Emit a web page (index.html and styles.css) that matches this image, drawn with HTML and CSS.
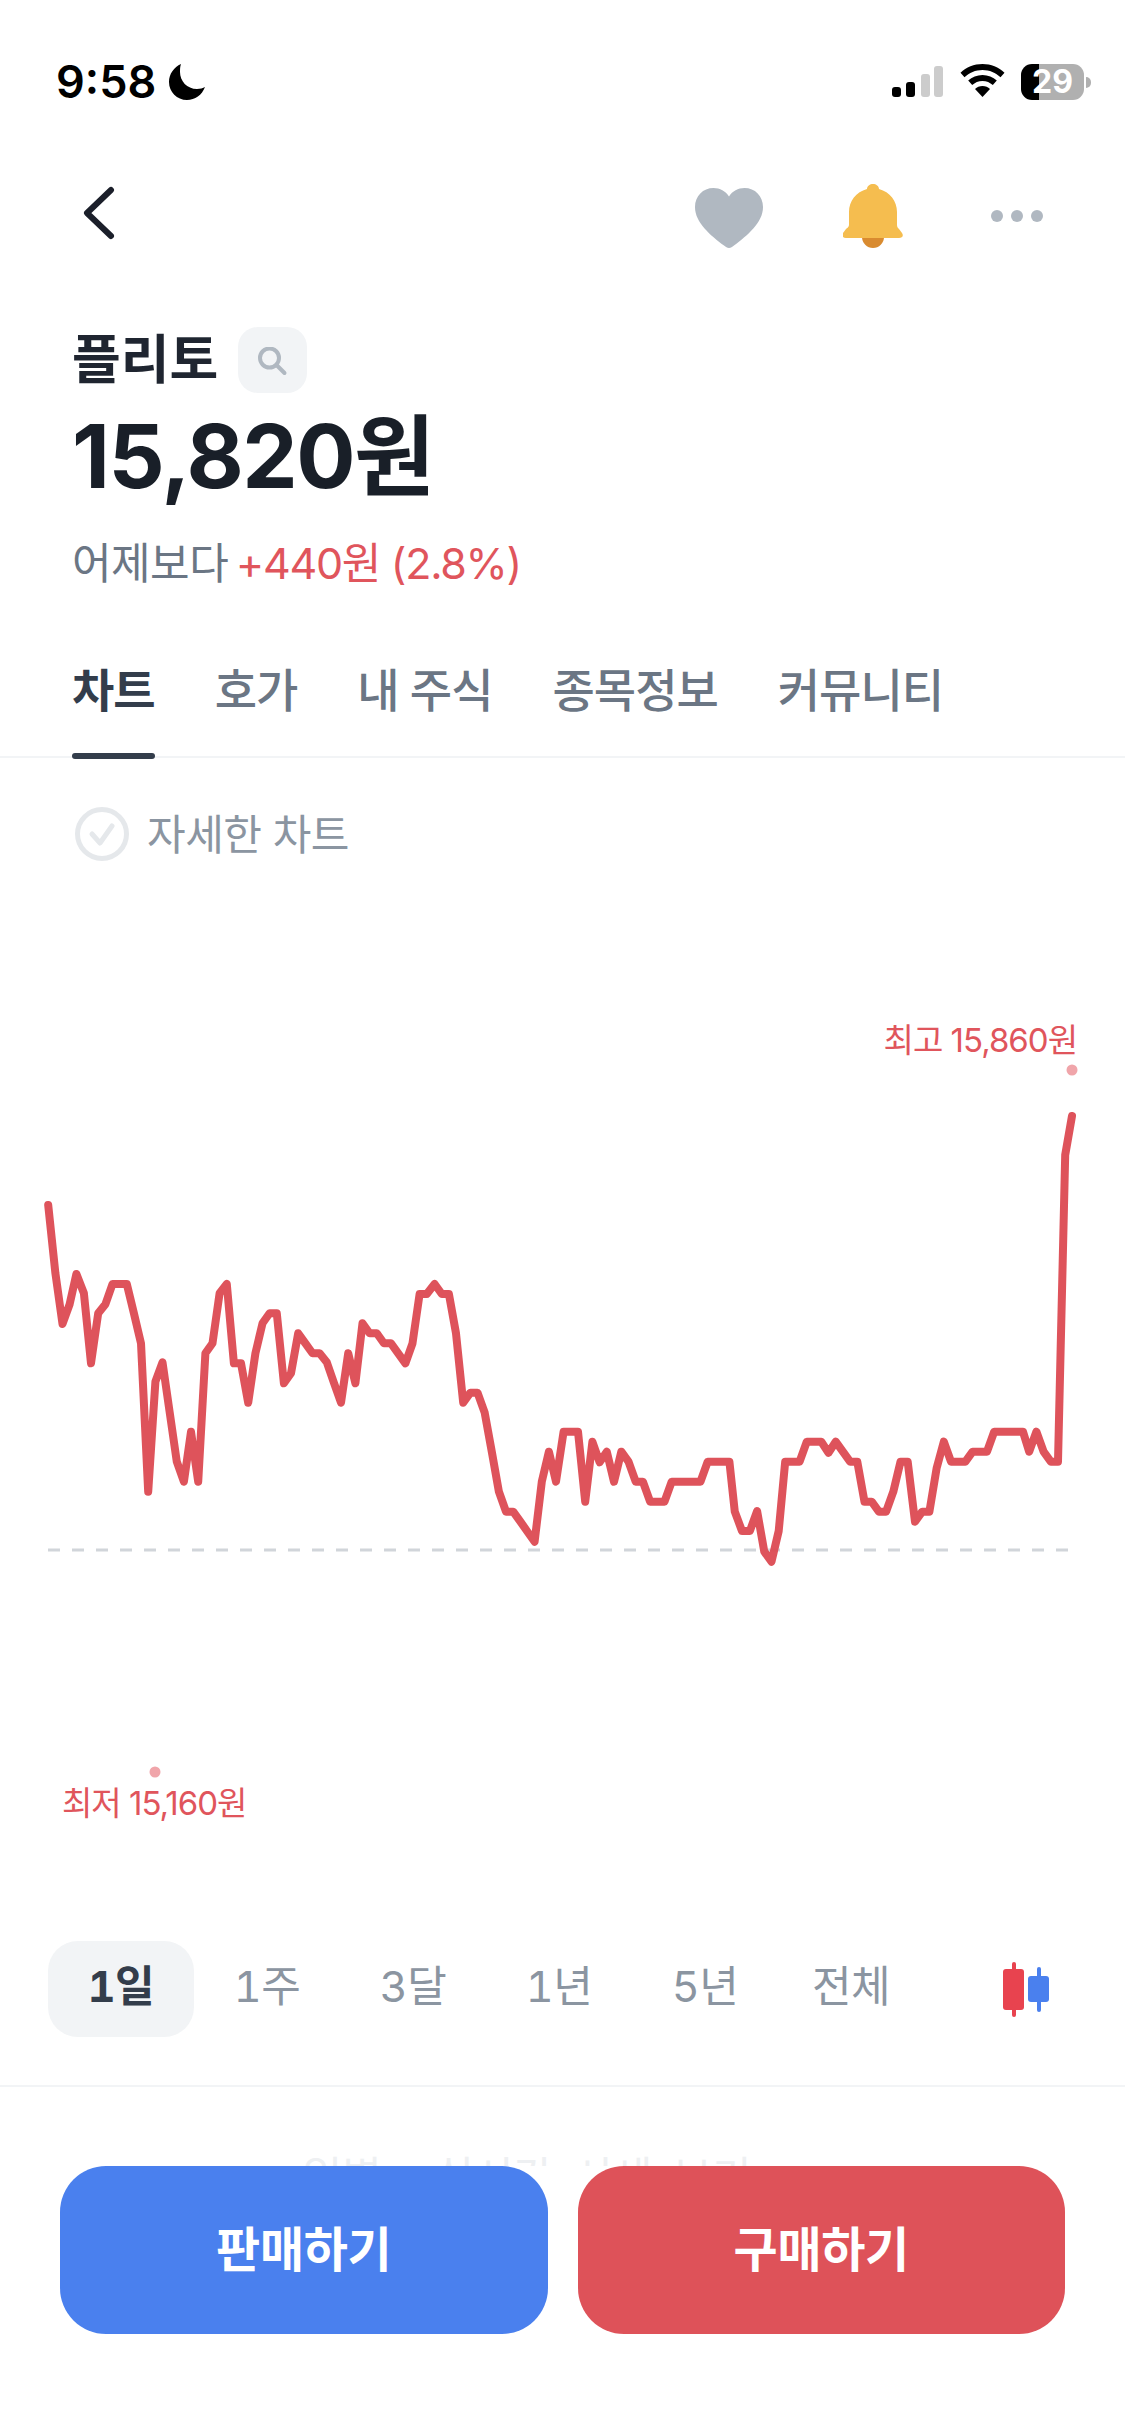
FILE: index.html
```html
<!DOCTYPE html>
<html lang="ko">
<head>
<meta charset="utf-8">
<title>플리토</title>
<link rel="stylesheet" href="styles.css">
</head>
<body>
<div class="page">
  <div class="status">
    <div class="status-left">
      <span class="time">9:58</span>
      <svg class="moon" viewBox="0 0 36 36"><path d="M12 0C5 3 0 10 0 18c0 10 8 18 18 18 8 0 15-5 18-13-2 1-5 2-8 2C18 25 11 17 11 8c0-3 0-5 1-8z"/></svg>
    </div>
    <div class="status-right">
      <svg class="signal" viewBox="0 0 51 31"><rect x="0" y="21" width="9" height="10" rx="3"/><rect x="14" y="16" width="9" height="15" rx="3"/><rect class="off" x="29" y="8" width="9" height="23" rx="3"/><rect class="off" x="42" y="0" width="9" height="31" rx="3"/></svg>
      <svg class="wifi" viewBox="0 0 45 33"><path d="M22.5 0C14 0 6.300 3.300.5 8.700l4 4.500C9.200 8.800 15.500 6 22.500 6s13.300 2.800 18 7.200l4-4.500C38.700 3.300 31 0 22.500 0z"/><path d="M22.500 11c-5.500 0-10.500 2.100-14.300 5.600l4 4.500c2.700-2.500 6.300-4.100 10.300-4.100s7.600 1.600 10.300 4.100l4-4.500C33 13.100 28 11 22.500 11z"/><path d="M22.500 22c-3 0-5.500 1.100-7.500 2.900l7.500 8.100 7.500-8.100C28 23.100 25.500 22 22.500 22z"/></svg>
      <div class="battery"><span class="battery-num">29</span></div>
      <span class="battery-nub"></span>
    </div>
  </div>

  <div class="nav">
    <svg class="back" viewBox="0 0 36 56"><path d="M31 4L7 27l24 23"/></svg>
    <div class="nav-actions">
      <svg class="heart" viewBox="0 0 68 60"><path d="M34 60c-2 0-3-1-5-2.400C16 47.500 0 35 0 19 0 8 8 0 18.500 0 25 0 30.500 3 34 8.500 37.500 3 43 0 49.500 0 60 0 68 8 68 19c0 16-16 28.500-29 38.600-2 1.400-3 2.400-5 2.400z"/></svg>
      <svg class="bell" viewBox="0 0 60 64"><circle class="clapper" cx="30" cy="53" r="11"/><path class="bell-body" d="M24 5c0-3 3-5 6-5s6 2 6 5c11 3 18 12 18 23v13c0 2 1 3 2 4l3 4c2 3 0 5-3 5H3c-3 0-5-2-3-5l3-4c1-1 3-2 3-4V28C6 17 13 8 24 5z"/></svg>
      <div class="dots"><i></i><i></i><i></i></div>
    </div>
  </div>

  <div class="summary">
    <div class="title-row">
      <h1 class="title">플리토</h1>
      <div class="search-pill">
        <svg class="search" viewBox="0 0 30 30"><circle cx="11.500" cy="11" r="9.500"/><path d="M18.500 18l8 8"/></svg>
      </div>
    </div>
    <div class="price">15,820원</div>
    <div class="change">어제보다 <span class="up">+440원 (2.8%)</span></div>
  </div>

  <div class="tabs">
    <div class="tab active">차트</div>
    <div class="tab">호가</div>
    <div class="tab">내 주식</div>
    <div class="tab">종목정보</div>
    <div class="tab">커뮤니티</div>
  </div>

  <div class="detail">
    <svg class="check" viewBox="0 0 54 54"><circle cx="27" cy="27" r="24.500"/><path d="M17 27l8 9 12-17"/></svg>
    <span class="detail-text">자세한 차트</span>
  </div>

  <div class="chart">
    <svg class="chart-svg" viewBox="0 900 1125 1000">
      <line class="base" x1="48" y1="1550" x2="1068" y2="1550"/>
      <polyline class="line" points="48.200,1205 55.400,1273.300 62.500,1324 69.600,1304.300 76.400,1274 83.900,1293.300 91,1363.300 98.200,1313.300 105.400,1304.300 112.500,1284 126.800,1284 133.900,1313.300 141,1343.300 148.200,1491.700 155.400,1381.700 162.500,1362.300 169.600,1411.700 176.800,1461.700 183.900,1481.700 191,1431.700 198.200,1481.700 205.400,1353.300 212.500,1343.300 219.600,1293.300 226.800,1284 233.900,1363.300 241,1363.300 248.200,1402.700 255.400,1353.300 262.500,1323.300 269.600,1313.300 276.800,1313.300 283.900,1383.300 291,1373.300 298.200,1333.300 305.400,1343.300 312.500,1353.300 319.600,1353.300 326.800,1362.300 333.900,1382.700 341,1402.700 348.200,1353.300 355.400,1383.300 362.500,1323.300 369.600,1333.300 376.800,1333.300 383.900,1343.300 391,1343.300 398.200,1353.300 405.400,1363.300 412.500,1343.300 419.600,1294 426.800,1294 434.600,1284 441.800,1294 448.900,1294 456,1333.300 463.200,1402.700 470.400,1392.700 477.500,1392.700 484.600,1412.300 491.800,1451.700 498.900,1491.700 506,1511.700 513.200,1511.700 520.400,1521.700 527.500,1531.700 534.600,1541.700 541.800,1481.700 548.900,1451.700 556,1481.700 563.600,1431.700 578,1431.700 585.200,1501.700 592.400,1441.700 599.600,1462.300 606.800,1451.700 614,1481.700 621.300,1451.700 628.500,1461.700 635.700,1481.700 642.900,1481.700 650.100,1501.700 664.500,1501.700 671.700,1481.700 700.500,1481.700 707.700,1461.700 729.400,1461.700 734.800,1511.700 742,1531 749.900,1531 757.100,1511 764.300,1551.700 771.500,1561.700 778.700,1531 785.200,1461.700 799.600,1461.700 806.800,1441.700 821.300,1441.700 828.500,1452.700 835.700,1441.700 842.900,1451.700 850.100,1461.700 857.300,1461.700 864.500,1501.700 871.700,1501.700 878.900,1511.700 886.100,1511.700 893.300,1491.700 900.500,1461.700 907.700,1461.700 915,1521.700 922.200,1511.700 929.400,1511.700 936.600,1468.300 943.800,1441.700 951,1461.700 965.400,1461.700 972.600,1451.700 987,1451.700 994.200,1431.700 1023,1431.700 1029.200,1451.700 1036.400,1431.700 1043.600,1451.700 1050.800,1461.700 1058,1461.700 1065.200,1155 1072,1116"/>
      <circle class="mark" cx="1072" cy="1070" r="5.500"/>
      <circle class="mark" cx="155" cy="1772" r="5.500"/>
    </svg>
    <span class="chart-label high">최고 15,860원</span>
    <span class="chart-label low">최저 15,160원</span>
  </div>

  <div class="ranges">
    <div class="range active">1일</div>
    <div class="range">1주</div>
    <div class="range">3달</div>
    <div class="range">1년</div>
    <div class="range">5년</div>
    <div class="range">전체</div>
    <svg class="candles" viewBox="0 0 46 55"><rect class="c-red" x="9" y="0" width="4" height="55" rx="2"/><rect class="c-red" x="0" y="7" width="21" height="41" rx="3"/><rect class="c-blue" x="34" y="5" width="4" height="45" rx="2"/><rect class="c-blue" x="25" y="14" width="21" height="26" rx="3"/></svg>
  </div>

  <div class="below">
    <div class="faded">일별 · 실시간 시세 보기 ›</div>
    <div class="actions">
      <div class="btn sell">판매하기</div>
      <div class="btn buy">구매하기</div>
    </div>
  </div>
</div>
</body>
</html>
```

FILE: styles.css
```css
* { box-sizing: border-box; margin: 0; padding: 0; }
html, body { background: #fff; }
body { width: 1125px; height: 2436px; overflow: hidden; font-family: "Inter", "Noto Sans CJK KR", sans-serif; }
.page { width: 1125px; height: 2436px; display: flex; flex-direction: column; color: #191f28; }

.status { margin-top: 64px; display: flex; justify-content: space-between; align-items: flex-start; height: 36px; padding: 0 34px 0 56px; }
.status-left { display: flex; align-items: center; gap: 13px; height: 36px; }
.time { font-size: 45px; font-weight: 600; line-height: 36px; color: #000; }
.moon { width: 36px; height: 36px; fill: #000; }
.status-right { display: flex; align-items: flex-start; }
.signal { width: 51px; height: 31px; margin-top: 2px; fill: #000; }
.signal .off { fill: #ccc; }
.wifi { width: 45px; height: 33px; margin-left: 17px; fill: #000; }
.battery { width: 63px; height: 36px; margin-left: 16px; background: linear-gradient(90deg, #000 18px, #b0b0b0 18px); border-radius: 11px; display: flex; align-items: center; justify-content: center; }
.battery-num { color: #fff; font-size: 32px; font-weight: 700; line-height: 36px; }
.battery-nub { width: 5px; height: 11px; margin: 13px 0 0 2px; background: #b0b0b0; border-radius: 0 5px 5px 0; }

.nav { display: flex; justify-content: space-between; align-items: flex-start; padding: 0 82px 0 80px; margin-top: 84px; height: 66px; }
.back { width: 36px; height: 56px; margin-top: 2px; fill: none; stroke: #1b1f2a; stroke-width: 6; stroke-linecap: round; stroke-linejoin: round; }
.nav-actions { display: flex; align-items: flex-start; }
.heart { width: 68px; height: 60px; margin-top: 4px; fill: #b0b8c1; }
.bell { width: 60px; height: 64px; margin-left: 80px; }
.bell-body { fill: #f5bd4f; }
.clapper { fill: #d98b30; }
.dots { display: flex; gap: 8px; margin: 26px 0 0 88px; }
.dots i { width: 12px; height: 12px; border-radius: 50%; background: #b0b8c1; }

.summary { padding: 0 72px; margin-top: 77px; }
.title-row { display: flex; align-items: center; gap: 20px; height: 66px; }
.title { font-size: 53px; font-weight: 700; line-height: 66px; color: #1f2530; }
.search-pill { width: 69px; height: 66px; border-radius: 20px; background: #f2f4f6; display: flex; align-items: center; justify-content: center; }
.search { width: 30px; height: 30px; margin-top: 4px; fill: none; stroke: #b0b8c1; stroke-width: 4; stroke-linecap: round; }
.price { font-size: 88px; font-weight: 700; line-height: 100px; margin-top: 13px; color: #191f28; letter-spacing: -1.5px; }
.change { font-size: 43px; line-height: 50px; margin-top: 32px; color: #6b7684; letter-spacing: -.5px; }
.up { color: #e0555c; letter-spacing: -1.3px; margin-left: -4px; }

.tabs { display: flex; gap: 60px; padding: 0 72px; margin-top: 74px; height: 96px; border-bottom: 2px solid #f2f4f6; }
.tab { position: relative; font-size: 46px; line-height: 56px; font-weight: 500; color: #6b7684; letter-spacing: -1px; white-space: nowrap; }
.tab.active { color: #333d4b; font-weight: 700; }
.tab.active::after { content: ""; position: absolute; left: 0; right: 0; top: 91px; height: 6px; border-radius: 3px; background: #333d4b; }

.detail { display: flex; align-items: center; gap: 18px; padding: 0 75px; margin-top: 48px; height: 56px; font-size: 42px; color: #8b95a1; letter-spacing: -.5px; }
.detail-text { padding-bottom: 6px; }
.check { width: 54px; height: 54px; fill: none; stroke: #e5e8eb; stroke-width: 5; stroke-linecap: round; stroke-linejoin: round; }

.chart { position: relative; height: 1000px; margin-top: 38px; flex: none; }
.chart-svg { display: block; width: 1125px; height: 1000px; }
.base { stroke: #d1d5da; stroke-width: 3; stroke-dasharray: 12 12; }
.line { fill: none; stroke: #dc4a52; stroke-opacity: .95; stroke-width: 8; stroke-linejoin: round; stroke-linecap: round; }
.mark { fill: #f0a5aa; }
.chart-label { position: absolute; font-size: 33px; line-height: 40px; color: #e0555c; letter-spacing: -1px; white-space: nowrap; }
.high { right: 48px; top: 120px; }
.low { left: 62px; top: 883px; }

.ranges { display: flex; align-items: center; padding: 0 48px; margin-top: 41px; height: 96px; flex: none; }
.range { width: 146px; height: 96px; font-size: 43px; line-height: 91px; text-align: center; color: #8b95a1; border-radius: 30px; letter-spacing: -.5px; font-feature-settings: "tnum"; }
.range.active { background: #f2f4f6; color: #333d4b; font-weight: 700; }
.candles { margin-left: 79px; width: 46px; height: 55px; }
.c-red { fill: #e8434f; }
.c-blue { fill: #4a80ee; }

.below { margin-top: 48px; border-top: 2px solid #f2f4f6; flex: 1; }
.faded { font-size: 43px; line-height: 50px; margin-top: 65px; padding-right: 34px; height: 14px; text-align: center; color: #eef0f2; word-spacing: 8px; overflow: hidden; white-space: nowrap; }
.actions { display: flex; gap: 30px; padding: 0 60px; background: #fff; }
.btn { flex: 1; height: 168px; border-radius: 46px; color: #fff; font-size: 48px; font-weight: 600; line-height: 168px; text-align: center; letter-spacing: -.3px; }
.sell { background: #4a80ee; }
.buy { background: #de5259; }
```
